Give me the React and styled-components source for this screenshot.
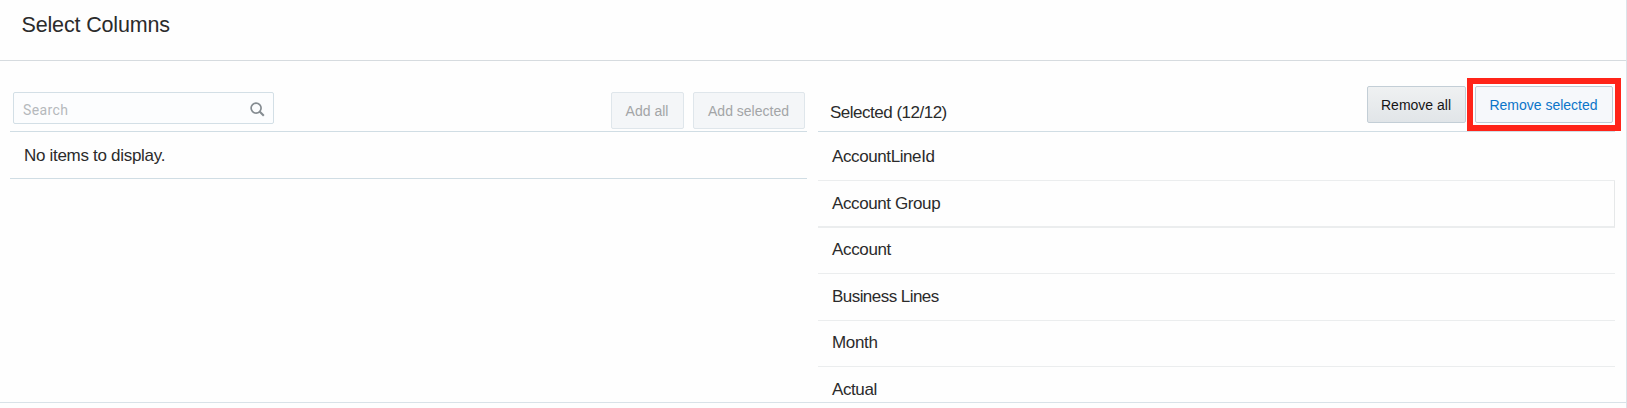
import React from 'react';
import styled, { createGlobalStyle } from 'styled-components';

const GlobalStyle = createGlobalStyle`
  *, *::after { box-sizing: border-box; }
  body {
    margin: 0;
    background: #fefefe;
    color: #2b2b2b;
    font-family: "Liberation Sans", Arial, sans-serif;
    overflow: hidden;
  }
`;

const Dialog = styled.div`
  width: 1627px;
  height: 408px;
  border-right: 1px solid #dce3e9;
  overflow: hidden;
`;

const Header = styled.header`
  height: 61px;
  padding: 13px 0 0 21.5px;
  border-bottom: 1px solid #d6dbdf;
`;

const Title = styled.h1`
  margin: 0;
  font-size: 21.5px;
  line-height: 24px;
  font-weight: 400;
  letter-spacing: -0.15px;
`;

const Body = styled.main`
  display: grid;
  grid-template-columns: 797px 797px;
  column-gap: 11px;
  height: 342px;
  padding-left: 10px;
  border-bottom: 1px solid #d9e2e8;
  overflow: hidden;
`;

const Panel = styled.section`
  min-width: 0;
`;

const Toolbar = styled.div`
  display: flex;
  align-items: flex-start;
  height: 71px;
  border-bottom: 1px solid #d0dde4;
`;

const SearchBox = styled.label`
  display: flex;
  align-items: center;
  width: 261px;
  height: 32px;
  margin: 31px auto 0 3px;
  padding: 0 8px 0 9px;
  border: 1px solid #d3dfe6;
  border-radius: 2px;
  background: #fcfdfe;
`;

const SearchInput = styled.input`
  flex: 1;
  min-width: 0;
  height: 20px;
  margin-top: 4px;
  padding: 0;
  border: 0;
  outline: 0;
  background: transparent;
  font: 14px/20px Roboto, sans-serif;
  letter-spacing: 0.4px;
  &::placeholder { color: #b5b9bc; opacity: 1; }
`;

const SearchIcon = styled.svg`
  width: 15px;
  height: 15px;
  margin-top: 2px;
  fill: none;
  stroke: #858c91;
`;

const palette = {
  disabled: { bg: '#f4f6f8', border: '#dfe6eb', text: '#a3a5a7' },
  normal: { bg: 'linear-gradient(#eff1f2, #e1e5e8)', border: '#c3ced6', text: '#151515' },
  hover: { bg: '#f6f8fb', border: '#c0ccd6', text: '#0b75c9' },
};

const Button = styled.button`
  flex: none;
  width: ${(p) => p.$width}px;
  height: 37px;
  margin: ${(p) => (p.$kind === 'disabled' ? 31 : 25)}px ${(p) => p.$gap}px 0 0;
  padding: 1px 1px 0 0;
  border: 1px solid ${(p) => palette[p.$kind].border};
  border-radius: 2px;
  background: ${(p) => palette[p.$kind].bg};
  color: ${(p) => palette[p.$kind].text};
  font: 14px/18px "Liberation Sans", Arial, sans-serif;
  white-space: nowrap;
`;

const Highlight = styled.div`
  position: relative;
  flex: none;
  width: 138px;
  margin-right: 2px;
  &::after {
    content: '';
    position: absolute;
    left: -8px;
    top: 17px;
    width: 154px;
    height: 53px;
    border: 6px solid #ff2419;
    pointer-events: none;
  }
`;

const Count = styled.div`
  margin: 42px auto 0 12px;
  font-size: 17px;
  line-height: 20px;
  letter-spacing: -0.5px;
`;

const Empty = styled.div`
  height: 47px;
  padding: 14px 0 0 14px;
  border-bottom: 1px solid #d0dde4;
  font-size: 17px;
  line-height: 20px;
  letter-spacing: -0.3px;
`;

const List = styled.ul`
  margin: 0;
  padding: 0;
  list-style: none;
`;

const Row = styled.li`
  height: ${(p) => p.$height}px;
  padding: ${(p) => p.$top}px 0 0 14px;
  border-bottom: ${(p) => (p.$focused ? 2 : 1)}px solid #ebedee;
  border-right: ${(p) => (p.$focused ? '1px solid #e6e8e9' : '0')};
  font-size: 17px;
  line-height: 20px;
  letter-spacing: ${(p) => p.$tracking}px;
`;

const rows = [
  { name: 'AccountLineId', height: 49, top: 15, tracking: -0.4 },
  { name: 'Account Group', height: 47, top: 13, tracking: -0.4, focused: true },
  { name: 'Account', height: 46, top: 12, tracking: -0.35 },
  { name: 'Business Lines', height: 47, top: 13, tracking: -0.55 },
  { name: 'Month', height: 46, top: 12, tracking: -0.35 },
  { name: 'Actual', height: 47, top: 13, tracking: -0.4 },
];

export default function App() {
  return (
    <>
      <GlobalStyle />
      <Dialog>
        <Header>
          <Title>Select Columns</Title>
        </Header>
        <Body>
          <Panel>
            <Toolbar>
              <SearchBox>
                <SearchInput placeholder="Search" />
                <SearchIcon viewBox="0 0 15 15">
                  <circle cx="6.1" cy="6.1" r="5" strokeWidth="1.7" />
                  <path d="M9.6 9.6 13.8 13.8" strokeWidth="2.1" />
                </SearchIcon>
              </SearchBox>
              <Button disabled $kind="disabled" $width={73} $gap={9}>Add all</Button>
              <Button disabled $kind="disabled" $width={112} $gap={2}>Add selected</Button>
            </Toolbar>
            <Empty>No items to display.</Empty>
          </Panel>
          <Panel>
            <Toolbar>
              <Count>Selected (12/12)</Count>
              <Button $kind="normal" $width={99} $gap={9}>Remove all</Button>
              <Highlight>
                <Button $kind="hover" $width={138} $gap={0}>Remove selected</Button>
              </Highlight>
            </Toolbar>
            <List>
              {rows.map((row) => (
                <Row
                  key={row.name}
                  $height={row.height}
                  $top={row.top}
                  $tracking={row.tracking}
                  $focused={row.focused}
                >
                  {row.name}
                </Row>
              ))}
            </List>
          </Panel>
        </Body>
      </Dialog>
    </>
  );
}
